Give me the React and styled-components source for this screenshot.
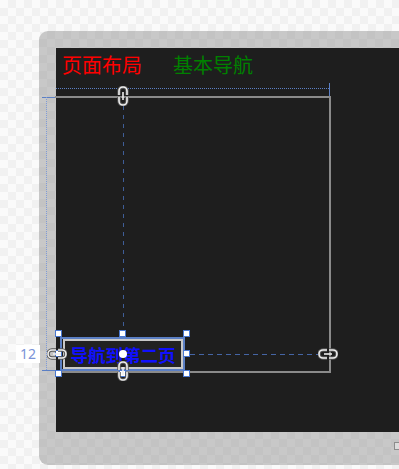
import React from 'react'
import styled, { createGlobalStyle } from 'styled-components'

const GlobalStyle = createGlobalStyle`
  html, body {
    margin: 0;
    padding: 0;
    width: 399px;
    height: 469px;
    overflow: hidden;
  }
  body {
    background-color: #f7f7f7;
    background-image: conic-gradient(#f1f1f1 25%, #fafafa 0 50%, #f1f1f1 0 75%, #fafafa 0);
    background-size: 16px 16px;
    font-family: "Noto Sans CJK SC", "Noto Sans", sans-serif;
  }
`

const Stage = styled.div`
  padding: 31px 0 0 39px;
  height: 469px;
  box-sizing: border-box;
`

const Frame = styled.div`
  position: relative;
  height: 434px;
  padding: 17px 0 0 17px;
  box-sizing: border-box;
  border-radius: 9px 0 0 9px;
  background-color: #c6c6c6;
  background-image: conic-gradient(#c3c3c3 25%, #c8c8c8 0 50%, #c3c3c3 0 75%, #c8c8c8 0);
  background-size: 16px 16px;
`

const Canvas = styled.div`
  position: relative;
  height: 384px;
  background: #1e1e1e;
`

const TitleBar = styled.div`
  display: flex;
  gap: 31px;
  padding: 4px 0 0 6px;
`

const Title = styled.div`
  font-size: 20px;
  line-height: 26px;
  color: ${p => p.color};
`

const HLine = styled.div`
  position: absolute;
  left: ${p => p.x}px;
  top: ${p => p.y}px;
  width: ${p => p.w}px;
  border-top: 1px ${p => p.kind || 'solid'} ${p => p.color};
`

const VLine = styled.div`
  position: absolute;
  left: ${p => p.x}px;
  top: ${p => p.y}px;
  height: ${p => p.h}px;
  border-left: 1px ${p => p.kind || 'solid'} ${p => p.color};
`

const DashH = styled.div`
  position: absolute;
  left: ${p => p.x}px;
  top: ${p => p.y}px;
  width: ${p => p.w}px;
  height: 1px;
  background: repeating-linear-gradient(90deg, #4565a5 0 5px, transparent 5px 9px);
`

const DashV = styled.div`
  position: absolute;
  left: ${p => p.x}px;
  top: ${p => p.y}px;
  width: 1px;
  height: ${p => p.h}px;
  background: repeating-linear-gradient(180deg, #3f5e98 0 4px, transparent 4px 9px);
`

const Container = styled.div`
  position: absolute;
  left: -1px;
  top: 48px;
  width: 274px;
  height: 273px;
  border: 2px solid #8a8a8a;
  border-left: none;
`

const Selection = styled.div`
  position: absolute;
  left: 4px;
  top: 289px;
  width: 125px;
  height: 34px;
  border: 2px solid #5b7fc4;
  box-sizing: border-box;
`

const NavButton = styled.div`
  position: absolute;
  left: 7px;
  top: 291px;
  width: 120px;
  height: 30px;
  box-sizing: border-box;
  border: 2px solid #c8c8c8;
  background: #222;
  display: flex;
  align-items: center;
  justify-content: center;
  color: #1010ff;
  font-weight: bold;
  font-size: 17.5px;
`

const Handle = styled.div`
  position: absolute;
  left: ${p => p.x - 4}px;
  top: ${p => p.y - 4}px;
  width: 5px;
  height: 5px;
  background: #fff;
  border: 1.5px solid #4a78d0;
`

const CenterDot = styled.div`
  position: absolute;
  left: 63px;
  top: 302px;
  width: 8px;
  height: 8px;
  border-radius: 50%;
  background: #fff;
`

const SizeLabel = styled.div`
  position: absolute;
  left: -40px;
  top: 297px;
  width: 24px;
  height: 18px;
  background: #fff;
  color: #7a93d8;
  font-family: "Noto Sans", sans-serif;
  font-size: 14px;
  line-height: 18px;
  text-align: center;
`

const LinkIcon = styled.svg`
  position: absolute;
  left: ${p => p.x}px;
  top: ${p => p.y}px;
`

const CornerBox = styled.div`
  position: absolute;
  right: -3px;
  bottom: 15px;
  width: 6px;
  height: 6px;
  border: 1.5px solid #8c8c8c;
  background: #dcdcdc;
`

const VLink = ({ x, y }) => (
  <LinkIcon x={x} y={y} width="12" height="20" viewBox="0 0 12 20">
    <path d="M2 9 V5 a4 4 0 0 1 8 0 V9" fill="none" stroke="#555" strokeWidth="3.5" />
    <path d="M2 11 V15 a4 4 0 0 0 8 0 V11" fill="none" stroke="#555" strokeWidth="3.5" />
    <path d="M2 9 V5 a4 4 0 0 1 8 0 V9" fill="none" stroke="#eee" strokeWidth="1.6" />
    <path d="M2 11 V15 a4 4 0 0 0 8 0 V11" fill="none" stroke="#eee" strokeWidth="1.6" />
    <line x1="6" y1="6" x2="6" y2="14" stroke="#eee" strokeWidth="1.6" />
  </LinkIcon>
)

const HLink = ({ x, y }) => (
  <LinkIcon x={x} y={y} width="20" height="12" viewBox="0 0 20 12">
    <path d="M9 2 H5 a4 4 0 0 0 0 8 H9" fill="none" stroke="#555" strokeWidth="3.5" />
    <path d="M11 2 H15 a4 4 0 0 1 0 8 H11" fill="none" stroke="#555" strokeWidth="3.5" />
    <path d="M9 2 H5 a4 4 0 0 0 0 8 H9" fill="none" stroke="#eee" strokeWidth="1.6" />
    <path d="M11 2 H15 a4 4 0 0 1 0 8 H11" fill="none" stroke="#eee" strokeWidth="1.6" />
    <line x1="6" y1="6" x2="14" y2="6" stroke="#eee" strokeWidth="1.6" />
  </LinkIcon>
)

export default function App() {
  const hx = [3, 67, 131]
  const hy = [286, 306, 326]
  return (
    <Stage>
      <GlobalStyle />
      <Frame>
        <Canvas>
          <TitleBar>
            <Title color="#ff0000">页面布局</Title>
            <Title color="#008000">基本导航</Title>
          </TitleBar>

          <HLine x={0} y={40} w={273} color="#5b7fc4" kind="dotted" />
          <VLine x={273} y={35} h={14} color="#5b7fc4" />
          <HLine x={-14} y={49} w={14} color="#5b7fc4" />
          <VLine x={-10} y={49} h={273} color="#7d9ad8" kind="dotted" />
          <HLine x={-14} y={322} w={20} color="#5b7fc4" />

          <Container />

          <DashV x={67} y={58} h={226} />
          <DashH x={134} y={306} w={130} />

          <Selection />
          <NavButton>导航到第二页</NavButton>
          {hy.map(y => hx.map(x => (
            (x === 67 && y === 306) ? null : <Handle key={x + '-' + y} x={x} y={y} />
          )))}
          <CenterDot />

          <VLink x={61} y={38} />
          <VLink x={61} y={313} />
          <HLink x={-9} y={300} />
          <HLink x={262} y={300} />

          <SizeLabel>12</SizeLabel>
        </Canvas>
        <CornerBox />
      </Frame>
    </Stage>
  )
}
